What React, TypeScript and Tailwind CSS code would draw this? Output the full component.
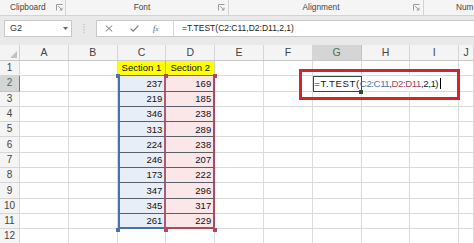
import React from "react";

const COLS = ["A", "B", "C", "D", "E", "F", "G", "H", "I", "J"];
const CV = [237, 219, 346, 313, 224, 246, 173, 347, 345, 261];
const DV = [169, 185, 238, 289, 238, 207, 222, 296, 317, 229];

function Launcher() {
  return (
    <svg width="7" height="7" viewBox="0 0 7 7" className="shrink-0">
      <path d="M0.5 6.5V0.5H6.5" fill="none" stroke="#9a9a9a" strokeWidth="1" />
      <path d="M2.2 2.2L6 6M6 3.6V6H3.6" fill="none" stroke="#9a9a9a" strokeWidth="1" />
    </svg>
  );
}

function Handle({ x, y, color }: { x: number; y: number; color: string }) {
  return (
    <div
      className="absolute w-[4px] h-[4px]"
      style={{ left: x - 2, top: y - 2, backgroundColor: color }}
    />
  );
}

function Cell({ r, ci }: { r: number; ci: number }) {
  const col = COLS[ci];
  const base = "shrink-0 box-border flex items-center leading-none text-[9.5px] text-[#111]";
  const w = ci === 9 ? " flex-1" : " w-[48.8px]";
  if (col === "C" && r === 1) {
    return (
      <div className={base + w + " bg-[#ffff00] border-r border-r-[#b9b97a] border-b border-b-[#4a70b0] pl-[4px]"}>
        Section 1
      </div>
    );
  }
  if (col === "D" && r === 1) {
    return (
      <div className={base + w + " bg-[#ffff00] border-r border-r-[#d8d8a0] border-b border-b-[#b0485f] pl-[4px]"}>
        Section 2
      </div>
    );
  }
  if (col === "C" && r >= 2 && r <= 11) {
    const bb = r === 11 ? " border-b-2 border-b-[#4a70b0]" : " border-b border-b-[#5a606b]";
    return (
      <div className={base + w + " bg-[#e8eef8] border-l-2 border-l-[#4a70b0] border-r-2 border-r-[#b05a72] justify-end pr-[2px]" + bb}>
        {CV[r - 2]}
      </div>
    );
  }
  if (col === "D" && r >= 2 && r <= 11) {
    const bb = r === 11 ? " border-b-2 border-b-[#b0485f]" : " border-b border-b-[#5a606b]";
    return (
      <div className={base + w + " bg-[#fbe7e8] border-r-2 border-r-[#b0485f] justify-end pr-[2px]" + bb}>
        {DV[r - 2]}
      </div>
    );
  }
  if (col === "G" && r === 2) {
    return (
      <div className={"shrink-0 box-border w-[48.8px] relative z-10 border-[1.5px] border-[#2e4a3b] overflow-visible"}>
        <div className="absolute left-[0.5px] top-0 bottom-0 flex items-center whitespace-nowrap text-[9.7px] leading-none text-[#1a1a1a]">
          <span className="tracking-[0.55px]">=T.TEST(</span>
          <span className="tracking-[-0.45px]">
            <span className="text-[#4676ba]">C2:C11</span>,<span className="text-[#a8455d]">D2:D11</span>,2,1)
          </span>
          <span className="inline-block w-[1px] h-[11px] bg-black ml-[2px]" />
        </div>
      </div>
    );
  }
  if (col === "H" && r === 2) {
    return <div className={base + w + " border-b border-[#dadada] border-r border-r-transparent"} />;
  }
  return <div className={base + w + " border-r border-b border-[#dadada]"} />;
}

export default function App() {
  const rows = Array.from({ length: 12 }, (_, i) => i + 1);
  return (
    <div className="w-[474px] h-[243px] overflow-hidden relative bg-white font-['Liberation_Sans',Arial,sans-serif]">
      {/* Ribbon group labels */}
      <div className="h-[16px] flex bg-[#f5f5f5] border-b border-[#d3d3d3] text-[8.3px] text-[#444] leading-none">
        <div className="w-[66px] shrink-0 flex items-center border-r border-[#d3d3d3] pl-[10px] pr-[2px]">
          <span className="flex-1">Clipboard</span>
          <Launcher />
        </div>
        <div className="w-[163px] shrink-0 flex items-center border-r border-[#d3d3d3] pr-[3px]">
          <span className="flex-1 text-center">Font</span>
          <Launcher />
        </div>
        <div className="w-[195px] shrink-0 flex items-center border-r border-[#d3d3d3] pr-[3px]">
          <span className="flex-1 text-center">Alignment</span>
          <Launcher />
        </div>
        <div className="flex-1 min-w-0 flex items-center pl-[32px] whitespace-nowrap">Num</div>
      </div>

      {/* Formula bar */}
      <div className="bg-[#e9e9e9] pt-[4px] pb-[8px] flex items-center">
        <div className="ml-[4px] w-[68px] shrink-0 h-[17px] bg-white border border-[#c8c8c8] flex items-center pl-[5px] pr-[3px] text-[9px] text-[#333] leading-none">
          <span className="flex-1">G2</span>
          <svg width="5" height="3" viewBox="0 0 5 3">
            <path d="M0 0H5L2.5 3Z" fill="#666" />
          </svg>
        </div>
        <div className="w-[24px] shrink-0 flex justify-center">
          <svg width="2" height="9" viewBox="0 0 2 9">
            <rect x="0.5" y="0" width="1" height="1" fill="#aaa" />
            <rect x="0.5" y="2.6" width="1" height="1" fill="#aaa" />
            <rect x="0.5" y="5.2" width="1" height="1" fill="#aaa" />
            <rect x="0.5" y="7.8" width="1" height="1" fill="#aaa" />
          </svg>
        </div>
        <div className="flex-1 min-w-0 h-[17px] bg-white border border-r-0 border-[#c8c8c8] flex items-center">
          <div className="w-[77px] shrink-0 h-full flex items-center border-r border-[#d6d6d6]">
            <svg width="8" height="7" viewBox="0 0 8 7" className="ml-[8px]">
              <path d="M0.8 0.6L7.2 6.4M7.2 0.6L0.8 6.4" stroke="#777" strokeWidth="1" fill="none" />
            </svg>
            <svg width="9" height="7" viewBox="0 0 9 7" className="ml-[17px]">
              <path d="M0.7 3.6L3.2 6.2L8.4 0.6" stroke="#777" strokeWidth="1.1" fill="none" />
            </svg>
            <span className="ml-[14px] text-[8.5px] italic text-[#555] font-['Liberation_Serif',serif] leading-none">
              f<span className="text-[6.5px]">x</span>
            </span>
          </div>
          <span className="pl-[8px] text-[8.5px] text-[#222] leading-none whitespace-nowrap">
            =T.TEST(C2:C11,D2:D11,2,1)
          </span>
        </div>
      </div>

      {/* Grid */}
      <div className="relative flex flex-col">
        <div className="h-[16px] flex bg-[#f4f4f4] border-b border-[#c9c9c9] text-[10.5px] text-[#444] leading-none">
          <div className="w-[20px] shrink-0 border-r border-[#d0d0d0] flex items-end justify-end pr-[2px] pb-[2px]">
            <svg width="7" height="7" viewBox="0 0 7 7">
              <path d="M7 0V7H0Z" fill="#c2c2c2" />
            </svg>
          </div>
          {COLS.map((c, i) => (
            <div
              key={c}
              className={
                (i === 9 ? "flex-1" : "w-[48.8px]") +
                " shrink-0 flex items-center justify-center border-r " +
                (c === "G"
                  ? "bg-[#d5d5d5] text-[#4d6e5a] border-[#c2c2c2]"
                  : "border-[#d6d6d6]")
              }
            >
              {c}
            </div>
          ))}
        </div>
        {rows.map((r) => (
          <div key={r} className="h-[15.3px] shrink-0 flex">
            <div
              className={
                "w-[20px] shrink-0 flex items-center justify-center text-[10px] leading-none border-r border-b " +
                (r === 2
                  ? "bg-[#d5d5d5] text-[#4d6e5a] border-b-[#c2c2c2] border-r-[#5f8a6e]"
                  : "bg-[#f4f4f4] text-[#444] border-[#d6d6d6]")
              }
            >
              {r}
            </div>
            {COLS.map((_, ci) => (
              <Cell key={ci} r={r} ci={ci} />
            ))}
          </div>
        ))}

        {/* range handles */}
        <div className="absolute left-0 top-0 z-20">
          <Handle x={118} y={31.3} color="#4a70b0" />
          <Handle x={166.4} y={31.3} color="#b0485f" />
          <Handle x={214.7} y={31.3} color="#b0485f" />
          <Handle x={118} y={184.5} color="#4a70b0" />
          <Handle x={166.4} y={184.5} color="#b0485f" />
          <Handle x={214.7} y={184.5} color="#b0485f" />
          <Handle x={361} y={46.5} color="#2e4a3b" />
        </div>

        {/* red annotation box */}
        <div className="absolute left-[299px] top-[24px] w-[161px] h-[31px] border-[3px] border-[#d4232d] z-30" />
      </div>
    </div>
  );
}
